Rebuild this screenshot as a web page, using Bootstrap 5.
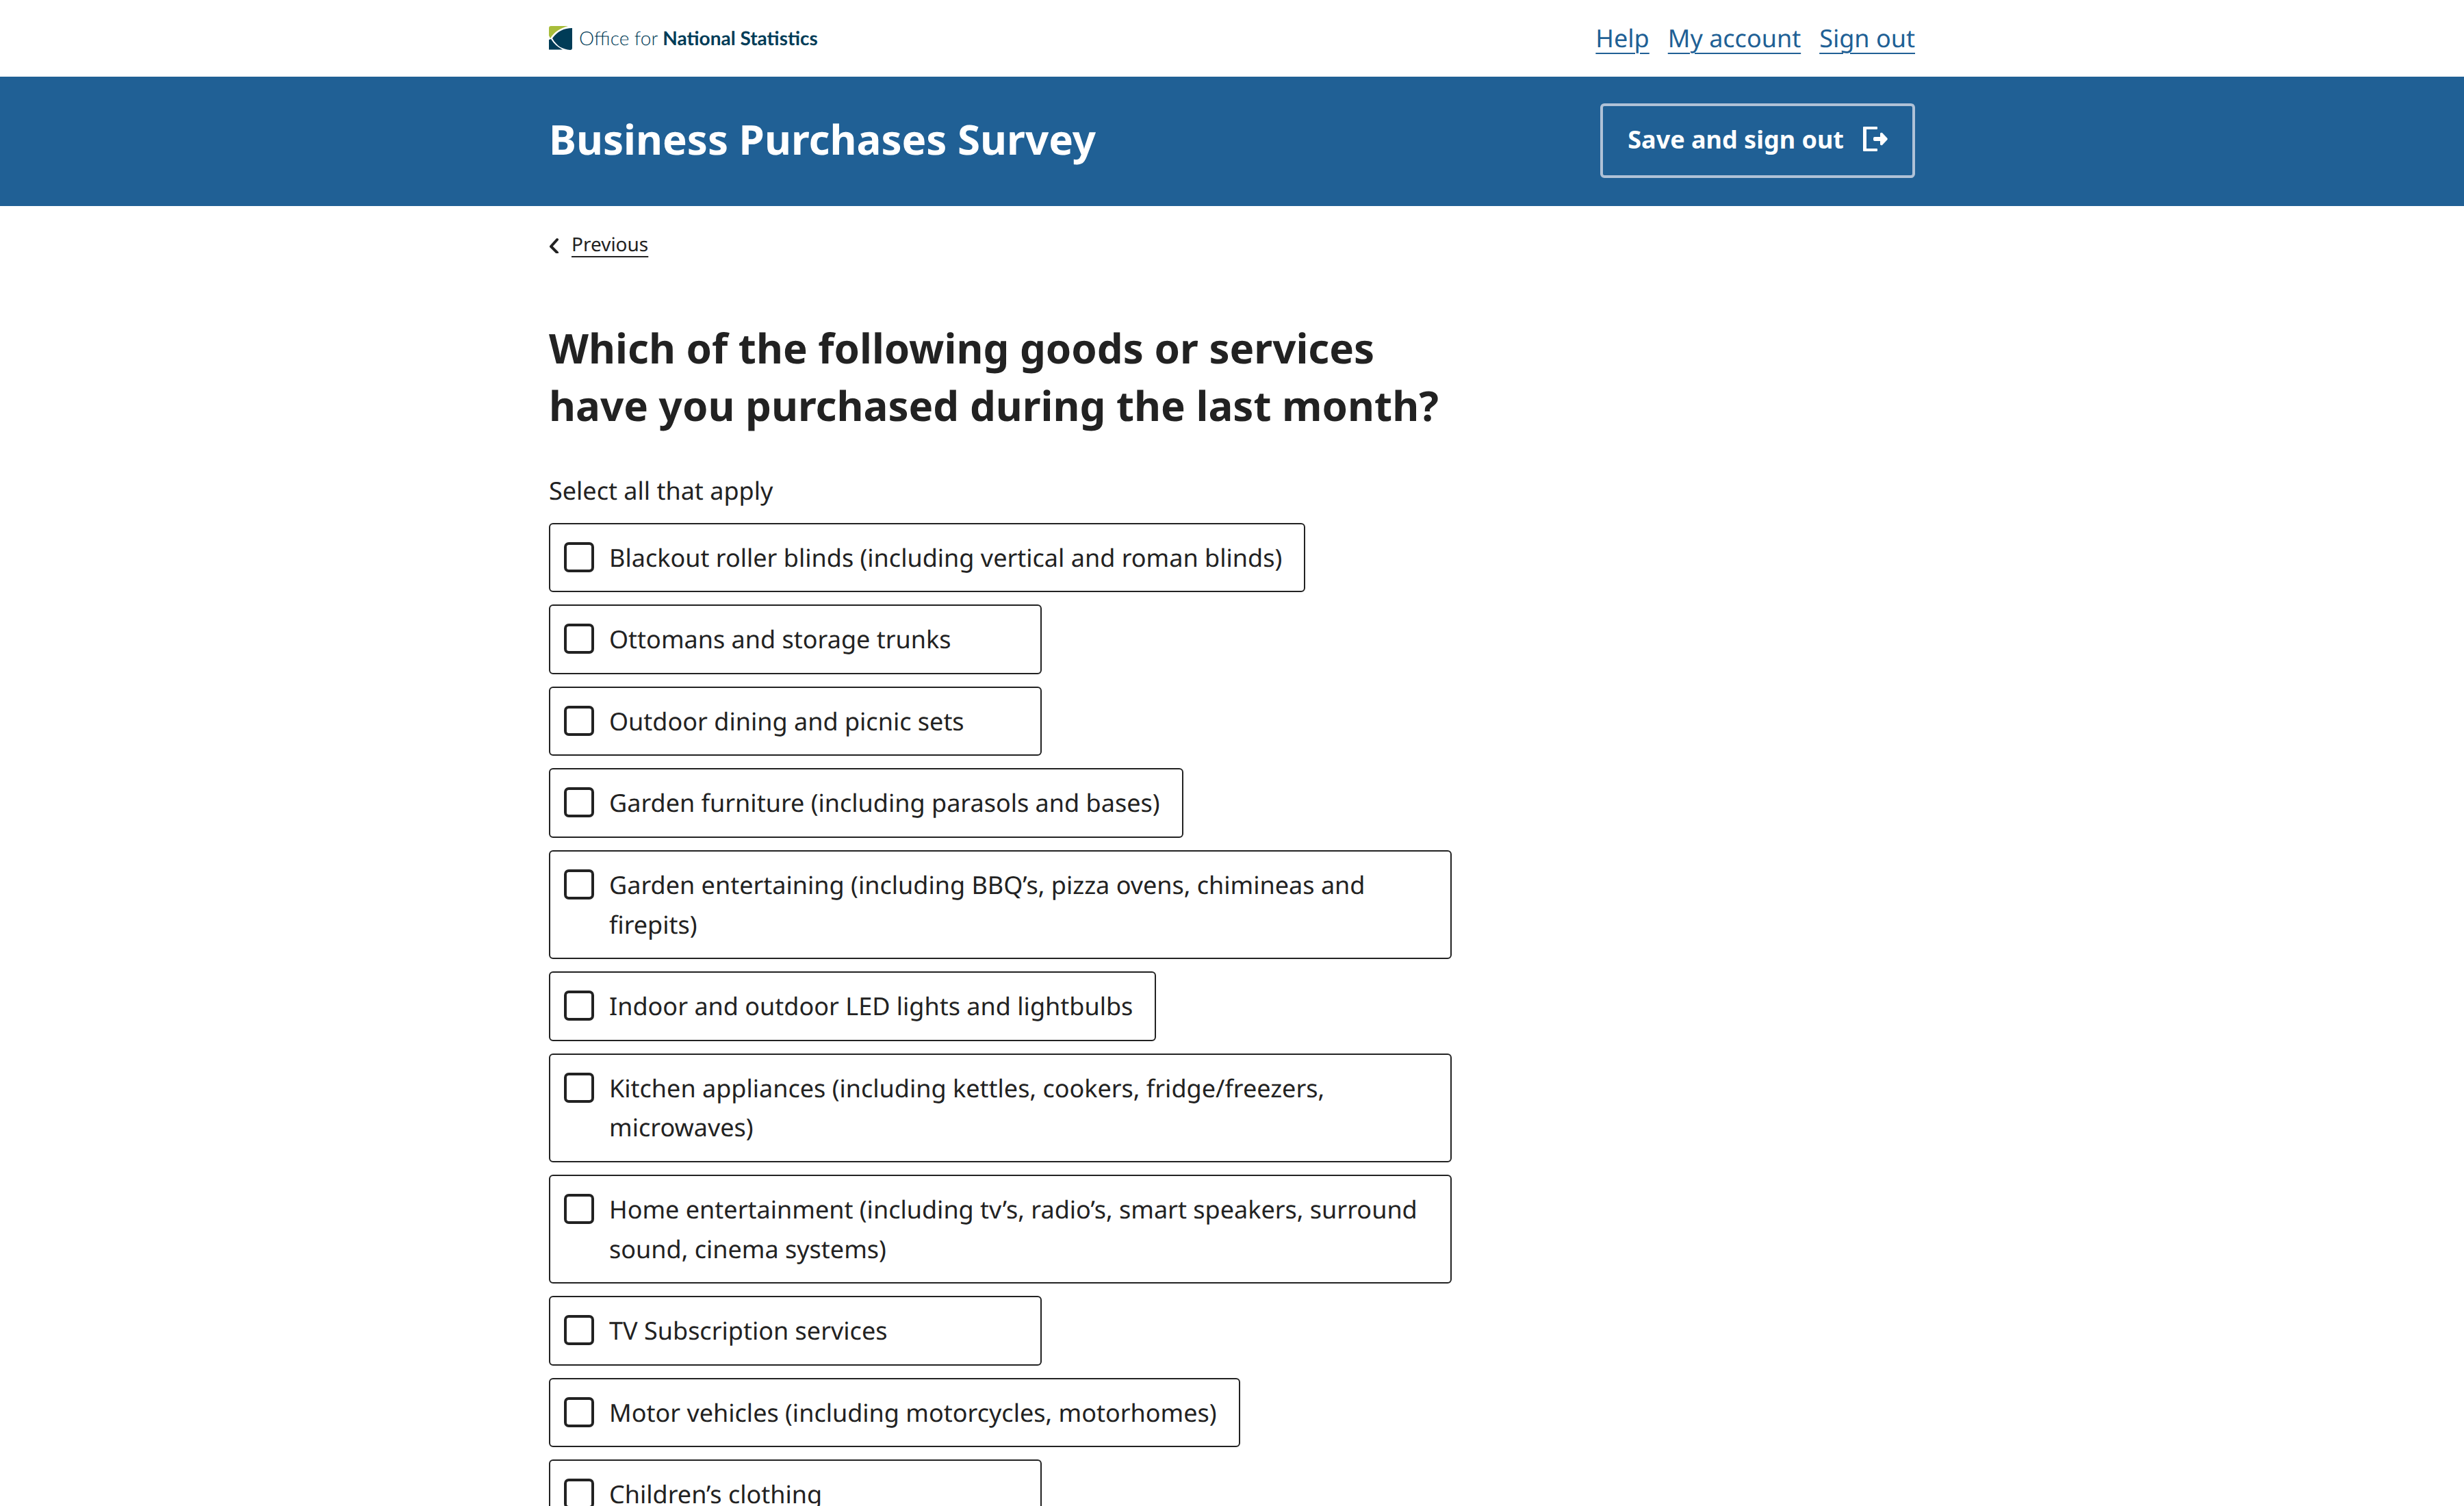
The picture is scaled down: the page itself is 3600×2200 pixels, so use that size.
<!DOCTYPE html>
<html lang="en">
<head>
<meta charset="utf-8">
<meta name="viewport" content="width=device-width, initial-scale=1">
<title>Business Purchases Survey</title>
<link href="https://cdn.jsdelivr.net/npm/bootstrap@5.3.0/dist/css/bootstrap.min.css" rel="stylesheet">
<style>
  body { font-family: "Noto Sans", sans-serif; font-size: 36px; line-height: 1.6; color: #222; background: #fff; text-rendering: geometricPrecision; }
  .wrap { width: 100%; max-width: 2068px; padding: 0 36px; margin: 0 auto; }
  .top-bar { padding: 27px 0; }
  .brand { color: #003c57; font-family: Lato, sans-serif; font-size: 28px; line-height: 36px; gap: 9px; }
  .brand-name { white-space: nowrap; padding-bottom: 2px; }
  .ons-link { text-decoration: underline; text-decoration-thickness: 2px; text-underline-offset: 8px; color: #206095; }
  .top-links { gap: 27px; }
  .title-bar { background: #206095; padding: 39px 0 41px; }
  .survey-title { font-size: 60px; font-weight: 700; line-height: 1.4; color: #fff; margin: 0; padding-bottom: 4px; }
  .btn-exit, .btn-exit:hover { font-size: 36px; font-weight: 700; line-height: 1.6; color: #fff; border: 4px solid #b0c2d7; border-radius: 6px; padding: 20px 36px 24px; gap: 28px; }
  .prev-nav { font-size: 28px; padding-top: 34px; gap: 18px; }
  .prev-nav .ons-link { color: #222; text-underline-offset: 7px; }
  .question-row { --bs-gutter-x: 36px; padding-top: 86px; }
  .question-title { font-size: 60px; font-weight: 700; line-height: 1.4; margin: 0 0 54px; }
  .options-legend { float: none; font-size: 36px; line-height: 1.6; margin: 0; }
  .options { gap: 18px; padding: 18px 0 72px; }
  .option { border: 2px solid #222; border-radius: 6px; min-width: 720px; max-width: 100%; padding: 20px 32px 20px 20px; gap: 22px; }
  .option .form-check-input { width: 44px; height: 44px; margin: 6px 0 0; border: 4px solid #222; border-radius: 7px; flex: none; }
  .option .form-check-input:checked { background-color: #222; }
</style>
</head>
<body>
<header>
  <div class="top-bar">
    <div class="wrap d-flex justify-content-between align-items-center">
      <a href="#" class="brand d-flex align-items-center text-decoration-none">
        <svg width="35" height="35" viewBox="0 0 35 35" aria-hidden="true">
          <path fill="#a8bd3a" d="M3 0H28C17 3 8 8 2 18L0 14V3Q0 0 3 0Z"/>
          <path fill="#003c57" d="M34 3V32Q34 35 31 35C20 34 12 30 5 18C12 8 22 3 34 3Z"/>
          <path fill="#003c57" d="M0 20L3 19Q9 29 20 34.500H0Z"/>
        </svg>
        <span class="brand-name fw-light">Office for <span class="fw-bold">National Statistics</span></span>
      </a>
      <nav class="top-links d-flex" aria-label="Account">
        <a class="ons-link" href="#">Help</a>
        <a class="ons-link" href="#">My account</a>
        <a class="ons-link" href="#">Sign out</a>
      </nav>
    </div>
  </div>
  <div class="title-bar">
    <div class="wrap d-flex justify-content-between align-items-center">
      <div class="survey-title">Business Purchases Survey</div>
      <button type="button" class="btn btn-exit d-flex align-items-center">
        <span>Save and sign out</span>
        <svg width="36" height="36" viewBox="0 0 36 36" fill="#fff" aria-hidden="true">
          <path d="M1 0H20Q21 0 21 1V3Q21 4 20 4H5V32H20Q21 32 21 33V35Q21 36 20 36H1Q0 36 0 35V1Q0 0 1 0Z"/>
          <path d="M17 15H25V10Q26 8 28 9L35.500 17Q36 18 35.500 19L28 27Q26 28 25 26V21H17Q15 21 15 19V17Q15 15 17 15Z"/>
        </svg>
      </button>
    </div>
  </div>
</header>
<main class="wrap">
  <nav class="prev-nav d-flex align-items-center" aria-label="Back">
    <svg width="15" height="24" viewBox="0 0 15 24" fill="none" stroke="#222" stroke-width="4" stroke-linecap="round" stroke-linejoin="round" aria-hidden="true"><path d="M12 4L3 14L12 23"/></svg>
    <a class="ons-link" href="#">Previous</a>
  </nav>
  <div class="row question-row">
    <form class="col-8">
      <h1 class="question-title">Which of the following goods or services have you purchased during the last month?</h1>
      <fieldset>
        <legend class="options-legend">Select all that apply</legend>
        <div class="options d-flex flex-column align-items-start">
          <label class="option d-flex align-items-start" for="o1"><input class="form-check-input" type="checkbox" id="o1"><span>Blackout roller blinds (including vertical and roman blinds)</span></label>
          <label class="option d-flex align-items-start" for="o2"><input class="form-check-input" type="checkbox" id="o2"><span>Ottomans and storage trunks</span></label>
          <label class="option d-flex align-items-start" for="o3"><input class="form-check-input" type="checkbox" id="o3"><span>Outdoor dining and picnic sets</span></label>
          <label class="option d-flex align-items-start" for="o4"><input class="form-check-input" type="checkbox" id="o4"><span>Garden furniture (including parasols and bases)</span></label>
          <label class="option d-flex align-items-start" for="o5"><input class="form-check-input" type="checkbox" id="o5"><span>Garden entertaining (including BBQ’s, pizza ovens, chimineas and firepits)</span></label>
          <label class="option d-flex align-items-start" for="o6"><input class="form-check-input" type="checkbox" id="o6"><span>Indoor and outdoor LED lights and lightbulbs</span></label>
          <label class="option d-flex align-items-start" for="o7"><input class="form-check-input" type="checkbox" id="o7"><span>Kitchen appliances (including kettles, cookers, fridge/freezers, microwaves)</span></label>
          <label class="option d-flex align-items-start" for="o8"><input class="form-check-input" type="checkbox" id="o8"><span>Home entertainment (including tv’s, radio’s, smart speakers, surround sound, cinema systems)</span></label>
          <label class="option d-flex align-items-start" for="o9"><input class="form-check-input" type="checkbox" id="o9"><span>TV Subscription services</span></label>
          <label class="option d-flex align-items-start" for="o10"><input class="form-check-input" type="checkbox" id="o10"><span>Motor vehicles (including motorcycles, motorhomes)</span></label>
          <label class="option d-flex align-items-start" for="o11"><input class="form-check-input" type="checkbox" id="o11"><span>Children’s clothing</span></label>
        </div>
      </fieldset>
    </form>
  </div>
</main>
<script src="https://cdn.jsdelivr.net/npm/bootstrap@5.3.0/dist/js/bootstrap.bundle.min.js"></script>
</body>
</html>
